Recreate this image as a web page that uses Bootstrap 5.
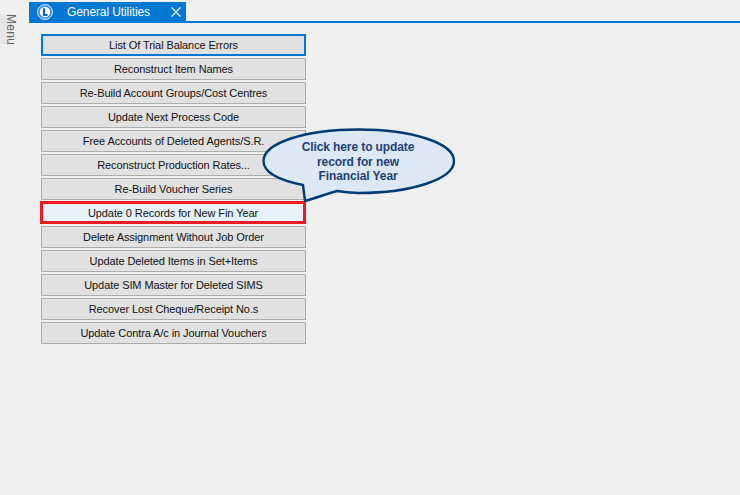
<!DOCTYPE html>
<html>
<head>
<meta charset="utf-8">
<link href="https://cdn.jsdelivr.net/npm/bootstrap@5.3.0/dist/css/bootstrap.min.css" rel="stylesheet">
<style>
html,body{height:100%;margin:0}
body{background:#f0f0f0;font-family:"Liberation Sans",Arial,sans-serif;font-size:12px;color:#111;overflow:hidden}
.app-shell{width:740px;height:495px}
.side-rail{width:29px;padding-top:14px}
.side-tab{width:17px;height:30px;background:linear-gradient(to right,#e6e6e6 12px,transparent 12px);writing-mode:vertical-rl;color:#666;font-size:12px;line-height:12px;letter-spacing:.3px;white-space:nowrap}
.tab-strip{height:23px;padding-top:2px;border-bottom:2px solid #0078d4;background:#f0f0f0}
.tab-active{width:157px;height:20px;background:#0078d4;color:#fff;font-size:12px}
.tab-logo{margin-left:8px;margin-right:14px}
.tab-title{width:83px;white-space:nowrap;letter-spacing:-.1px;margin-right:21px}
.util-stack{padding:11px 0 0 12px;width:278px;gap:2px}
.util-btn{width:265px;height:22px;background:#e1e1e1;border:1px solid #adadad;border-radius:0;padding:0;font-size:11px;line-height:20px;color:#111;letter-spacing:-.09px;white-space:nowrap;text-align:center}
.util-btn:hover{background:#e1e1e1;border-color:#adadad;color:#111}
.util-first{border:2px solid #0078d7;line-height:18px}
.util-first:hover{border-color:#0078d7}
.util-hot{background:#e5f1fb;border:3px solid #ed1c24;line-height:16px;padding-top:1px;width:266px;height:23px;margin:-1px 0 0 -1px}
.util-hot:hover{background:#e5f1fb;border-color:#ed1c24}
.bubble-layer{position:absolute;left:260px;top:128px;width:198px;height:76px}
.bubble-layer svg{position:absolute;left:0;top:0}
.bubble-copy{position:absolute;left:2px;top:12px;width:192px;text-align:center;color:#1f3f77;font-weight:700;font-size:12px;line-height:14.6px;letter-spacing:-.1px}
</style>
</head>
<body>
<div class="app-shell d-flex position-relative">
  <div class="side-rail flex-shrink-0"><div class="side-tab">Menu</div></div>
  <div class="flex-grow-1 d-flex flex-column">
    <div class="tab-strip flex-shrink-0">
      <div class="tab-active d-flex align-items-center">
        <svg class="tab-logo flex-shrink-0" width="16" height="16" viewBox="0 0 16 16"><circle cx="8" cy="8" r="7.5" fill="#3d8fe0" stroke="#d5e8fa"/><circle cx="8" cy="8" r="5.2" fill="#fff"/><path d="M7 4.2v6.8h3.6" fill="none" stroke="#0a62b8" stroke-width="2.2"/></svg>
        <span class="tab-title">General Utilities</span>
        <svg width="10" height="10" viewBox="0 0 10 10"><path d="M.6.6l8.8 8.8M9.400.6L.6 9.400" stroke="#d7e9f8" stroke-width="1.400"/></svg>
      </div>
    </div>
    <div class="util-stack d-flex flex-column">
      <button class="btn util-btn util-first">List Of Trial Balance Errors</button>
      <button class="btn util-btn">Reconstruct Item Names</button>
      <button class="btn util-btn">Re-Build Account Groups/Cost Centres</button>
      <button class="btn util-btn">Update Next Process Code</button>
      <button class="btn util-btn">Free Accounts of Deleted Agents/S.R.</button>
      <button class="btn util-btn">Reconstruct Production Rates...</button>
      <button class="btn util-btn">Re-Build Voucher Series</button>
      <button class="btn util-btn util-hot">Update 0 Records for New Fin Year</button>
      <button class="btn util-btn">Delete Assignment Without Job Order</button>
      <button class="btn util-btn">Update Deleted Items in Set+Items</button>
      <button class="btn util-btn">Update SIM Master for Deleted SIMS</button>
      <button class="btn util-btn">Recover Lost Cheque/Receipt No.s</button>
      <button class="btn util-btn">Update Contra A/c in Journal Vouchers</button>
    </div>
  </div>
  <div class="bubble-layer">
    <svg width="198" height="76" viewBox="0 0 198 76"><path d="M43 57C18 52 3.500 44 3.500 33 3.500 15 45 1.500 98.500 1.500S194 15 194 33 152 65 98.500 65C90 65 84 64 77 63 66 66 56 70 45 73Z" fill="#dce8f6" stroke="#003a75" stroke-width="2.400" stroke-linejoin="round"/></svg>
    <div class="bubble-copy">Click here to update<br>record for new<br>Financial Year</div>
  </div>
</div>
<script src="https://cdn.jsdelivr.net/npm/bootstrap@5.3.0/dist/js/bootstrap.bundle.min.js"></script>
</body>
</html>
